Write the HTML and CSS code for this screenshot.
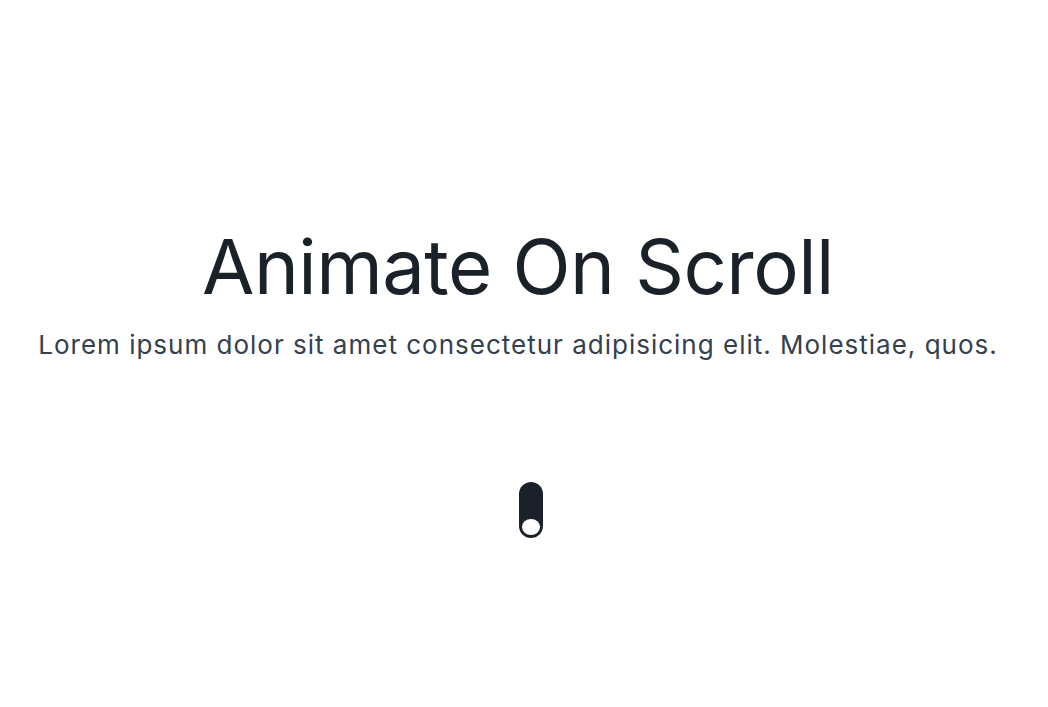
FILE: index.html
```html
<!DOCTYPE html>
<html lang="en">
<head>
<meta charset="utf-8">
<title>Animate On Scroll</title>
<link rel="stylesheet" href="styles.css">
</head>
<body>
<header class="hero">
  <h1 class="hero-title">Animate On Scroll</h1>
  <p class="hero-text">Lorem ipsum dolor sit amet consectetur adipisicing elit. Molestiae, quos.</p>
  <div class="mouse"><span class="wheel"></span></div>
</header>
</body>
</html>
```
FILE: styles.css
```css
* { box-sizing: border-box; }
html, body { margin: 0; padding: 0; background: #fff; }
body { font-family: Inter, "Liberation Sans", sans-serif; }
.hero {
  height: 707px;
  display: flex;
  flex-direction: column;
  align-items: center;
  padding: 220px 12px 0 0;
}
.hero-title {
  margin: 0;
  font-weight: 400;
  font-size: 76px;
  line-height: 92px;
  letter-spacing: -0.55px;
  color: #1b2128;
}
.hero-text {
  margin: 15px 0 0;
  font-size: 26px;
  line-height: 36px;
  letter-spacing: 1px;
  color: #34404e;
}
.mouse {
  margin-top: 119px;
  margin-left: 26px;
  width: 24px;
  height: 56px;
  border-radius: 12px;
  background: #1b2128;
  display: flex;
  justify-content: center;
  align-items: flex-end;
  padding-bottom: 3px;
}
.wheel {
  width: 18px;
  height: 16px;
  border-radius: 50%;
  background: #fff;
}
```
